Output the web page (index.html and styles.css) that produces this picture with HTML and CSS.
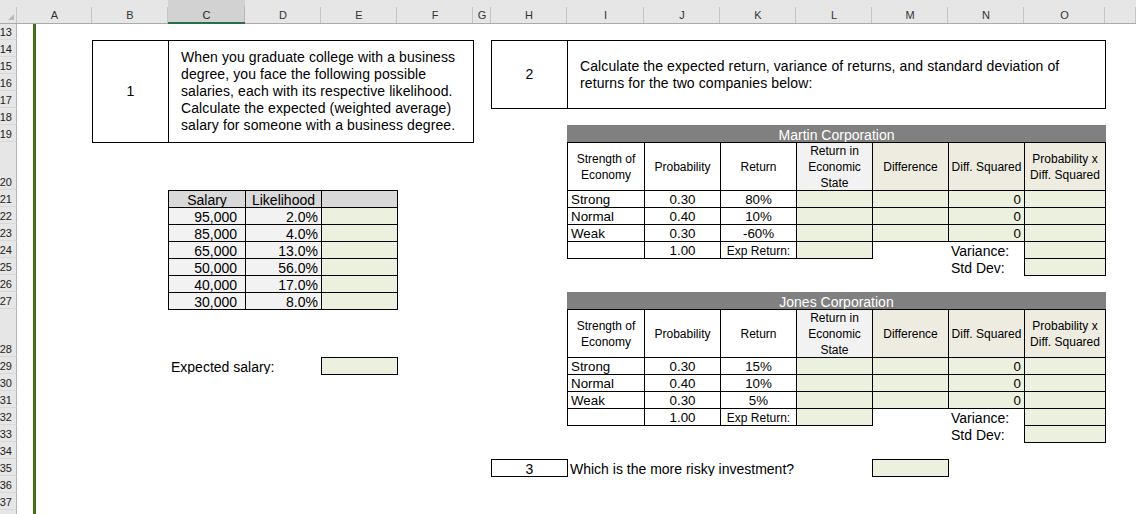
FILE: index.html
```html
<!DOCTYPE html>
<html>
<head>
<meta charset="utf-8">
<title>Sheet</title>
<link rel="stylesheet" href="styles.css">
</head>
<body>
<div class="sheet">
  <div class="ch corner"><span class="tri"></span></div>
  <div class="ch">A</div>
  <div class="ch">B</div>
  <div class="ch sel">C</div>
  <div class="ch">D</div>
  <div class="ch">E</div>
  <div class="ch">F</div>
  <div class="ch">G</div>
  <div class="ch">H</div>
  <div class="ch">I</div>
  <div class="ch">J</div>
  <div class="ch">K</div>
  <div class="ch">L</div>
  <div class="ch">M</div>
  <div class="ch">N</div>
  <div class="ch">O</div>
  <div class="ch"></div>

  <div class="rh">13</div><div class="rh">14</div><div class="rh">15</div><div class="rh">16</div>
  <div class="rh">17</div><div class="rh">18</div><div class="rh">19</div><div class="rh">20</div>
  <div class="rh">21</div><div class="rh">22</div><div class="rh">23</div><div class="rh">24</div>
  <div class="rh">25</div><div class="rh">26</div><div class="rh">27</div><div class="rh">28</div>
  <div class="rh">29</div><div class="rh">30</div><div class="rh">31</div><div class="rh">32</div>
  <div class="rh">33</div><div class="rh">34</div><div class="rh">35</div><div class="rh">36</div>
  <div class="rh">37</div><div class="rh"></div>

  <div class="freeze"></div>

  <div class="qbox box1">
    <div class="qnum">1</div>
    <div class="qtext">When you graduate college with a business<br>degree, you face the following possible<br>salaries, each with its respective likelihood.<br>Calculate the expected (weighted average)<br>salary for someone with a business degree.</div>
  </div>

  <div class="qbox box2">
    <div class="qnum">2</div>
    <div class="qtext">Calculate the expected return, variance of returns, and standard deviation of<br>returns for the two companies below:</div>
  </div>

  <div class="salary">
    <div class="k b sh ctr">Salary</div><div class="k b sh ctr">Likelihood</div><div class="k b sh"></div>
    <div class="k b lg rt sv">95,000</div><div class="k b lg rt">2.0%</div><div class="k b g"></div>
    <div class="k b lg rt sv">85,000</div><div class="k b lg rt">4.0%</div><div class="k b g"></div>
    <div class="k b lg rt sv">65,000</div><div class="k b lg rt">13.0%</div><div class="k b g"></div>
    <div class="k b lg rt sv">50,000</div><div class="k b lg rt">56.0%</div><div class="k b g"></div>
    <div class="k b lg rt sv">40,000</div><div class="k b lg rt">17.0%</div><div class="k b g"></div>
    <div class="k b lg rt sv">30,000</div><div class="k b lg rt">8.0%</div><div class="k b g"></div>
  </div>

  <div class="k big exp-label lt">Expected salary:</div>
  <div class="k b g exp-box"></div>

  <div class="tbl martin">
    <div class="k big title">Martin Corporation</div>
    <div class="k b hd">Strength of<br>Economy</div>
    <div class="k b hd">Probability</div>
    <div class="k b hd">Return</div>
    <div class="k b hd lg">Return in<br>Economic<br>State</div>
    <div class="k b hd tan">Difference</div>
    <div class="k b hd tan">Diff. Squared</div>
    <div class="k b hd tan">Probability x<br>Diff. Squared</div>

    <div class="k b lt">Strong</div><div class="k b ctr">0.30</div><div class="k b ctr">80%</div><div class="k b g"></div><div class="k b g"></div><div class="k b g rt">0</div><div class="k b g"></div>
    <div class="k b lt">Normal</div><div class="k b ctr">0.40</div><div class="k b ctr">10%</div><div class="k b g"></div><div class="k b g"></div><div class="k b g rt">0</div><div class="k b g"></div>
    <div class="k b lt">Weak</div><div class="k b ctr">0.30</div><div class="k b ctr">-60%</div><div class="k b g"></div><div class="k b g"></div><div class="k b g rt">0</div><div class="k b g"></div>
    <div class="k b"></div><div class="k b ctr">1.00</div><div class="k b ctr sm">Exp Return:</div><div class="k b g"></div><div class="k"></div><div class="k big lt">Variance:</div><div class="k b g"></div>
    <div class="k"></div><div class="k"></div><div class="k"></div><div class="k"></div><div class="k"></div><div class="k big lt">Std Dev:</div><div class="k b g"></div>
  </div>

  <div class="tbl jones">
    <div class="k big title">Jones Corporation</div>
    <div class="k b hd">Strength of<br>Economy</div>
    <div class="k b hd">Probability</div>
    <div class="k b hd">Return</div>
    <div class="k b hd lg">Return in<br>Economic<br>State</div>
    <div class="k b hd tan">Difference</div>
    <div class="k b hd tan">Diff. Squared</div>
    <div class="k b hd tan">Probability x<br>Diff. Squared</div>

    <div class="k b lt">Strong</div><div class="k b ctr">0.30</div><div class="k b ctr">15%</div><div class="k b g"></div><div class="k b g"></div><div class="k b g rt">0</div><div class="k b g"></div>
    <div class="k b lt">Normal</div><div class="k b ctr">0.40</div><div class="k b ctr">10%</div><div class="k b g"></div><div class="k b g"></div><div class="k b g rt">0</div><div class="k b g"></div>
    <div class="k b lt">Weak</div><div class="k b ctr">0.30</div><div class="k b ctr">5%</div><div class="k b g"></div><div class="k b g"></div><div class="k b g rt">0</div><div class="k b g"></div>
    <div class="k b"></div><div class="k b ctr">1.00</div><div class="k b ctr sm">Exp Return:</div><div class="k b g"></div><div class="k"></div><div class="k big lt">Variance:</div><div class="k b g"></div>
    <div class="k"></div><div class="k"></div><div class="k"></div><div class="k"></div><div class="k"></div><div class="k big lt">Std Dev:</div><div class="k b g"></div>
  </div>

  <div class="k b big ctr q3-num">3</div>
  <div class="k big lt q3-text">Which is the more risky investment?</div>
  <div class="k b g q3-ans"></div>
</div>
</body>
</html>
```

FILE: styles.css
```css
* { box-sizing: border-box; }
html, body {
  margin: 0;
  padding: 0;
  background: #fff;
  width: 1136px;
  height: 514px;
  overflow: hidden;
}
body {
  font-family: "Liberation Sans", Arial, sans-serif;
  font-size: 13.33px;
  color: #000;
}

.sheet {
  display: grid;
  grid-template-columns: 17px 75px 76px 77px 76px 76px 76px 18px 76px 77px 76px 76px 76px 76px 76px 81px 31px;
  grid-template-rows: 24px 16px repeat(6, 17px) 48px repeat(7, 17px) 48px repeat(10, 17px);
}

/* column headers */
.ch {
  grid-row: 1;
  background: linear-gradient(#c4c4c4, #c4c4c4) right bottom / 1px 16px no-repeat, #e6e6e6;
  border-bottom: 1px solid #ababab;
  font-size: 11px;
  color: #333;
  text-align: center;
  padding-top: 9px;
  line-height: 12px;
}
.ch.sel {
  background: linear-gradient(#b8b8b8, #b8b8b8) right bottom / 1px 16px no-repeat, #d2d2d2;
  border-bottom: 2px solid #217346;
  color: #222;
}
.ch.corner {
  display: flex;
  justify-content: flex-end;
  align-items: flex-end;
  padding: 0 3px 3px 0;
}
.tri {
  width: 0;
  height: 0;
  border-left: 6px solid transparent;
  border-bottom: 6px solid #b9b9b9;
}

/* row headers */
.rh {
  grid-column: 1;
  background: #e6e6e6;
  border-right: 1px solid #b5b5b5;
  border-bottom: 1px solid #d8d8d8;
  font-size: 11px;
  color: #222;
  display: flex;
  justify-content: flex-end;
  align-items: flex-end;
  padding-right: 4px;
  line-height: 13px;
  overflow: hidden;
  white-space: nowrap;
}

.freeze {
  grid-column: 2;
  grid-row: 2 / -1;
  margin-left: 16px;
  width: 3px;
  background: #41701a;
}

/* generic cell */
.k {
  display: flex;
  align-items: flex-end;
  line-height: 14px;
  white-space: nowrap;
  overflow: hidden;
  min-width: 0;
}
.big { font-size: 14px; }
.b {
  border: 1px solid #000;
  margin: 0 -1px -1px 0;
}
.ctr { justify-content: center; }
.rt { justify-content: flex-end; padding-right: 3px; }
.lt { padding-left: 3px; }
.g { background: #ebf1de; }
.lg { background: #f2f2f2; }
.tan { background: #eeece1; }
.sm { font-size: 12px; }

/* question boxes */
.qbox {
  border: 1px solid #000;
  margin: 0 -1px -1px 0;
  display: grid;
  grid-template-columns: 76px 1fr;
  font-size: 14px;
}
.box1 { grid-column: 3 / 8; grid-row: 3 / 9; }
.box2 { grid-column: 9 / 17; grid-row: 3 / 7; }
.qnum {
  border-right: 1px solid #000;
  display: flex;
  align-items: center;
  justify-content: center;
  line-height: 17px;
}
.qtext {
  display: flex;
  align-items: center;
  padding-left: 12px;
  line-height: 17px;
  letter-spacing: 0.1px;
  white-space: nowrap;
}

/* salary table */
.salary {
  grid-column: 4 / 7;
  grid-row: 10 / 17;
  display: grid;
  grid-template-columns: 77px 76px 76px;
  grid-template-rows: repeat(7, 17px);
  font-size: 14px;
}
.sh { background: #d9d9d9; }
.sv { padding-right: 8px; }

.exp-label { grid-column: 4 / 6; grid-row: 18; }
.exp-box { grid-column: 6; grid-row: 18; }

/* company tables */
.tbl {
  display: grid;
  grid-template-columns: 77px 76px 76px 76px 76px 76px 81px;
  grid-template-rows: 17px 48px repeat(5, 17px);
}
.martin { grid-column: 10 / 17; grid-row: 8 / 15; }
.jones { grid-column: 10 / 17; grid-row: 16 / 23; }
.title {
  grid-column: 1 / -1;
  background: #808080;
  color: #fff;
  justify-content: center;
  margin-right: -1px;
}
.hd {
  align-items: center;
  justify-content: center;
  text-align: center;
  font-size: 12px;
  line-height: 16px;
}

.q3-num { grid-column: 9; grid-row: 24; }
.q3-text { grid-column: 10 / 14; grid-row: 24; }
.q3-ans { grid-column: 14; grid-row: 24; }
```
